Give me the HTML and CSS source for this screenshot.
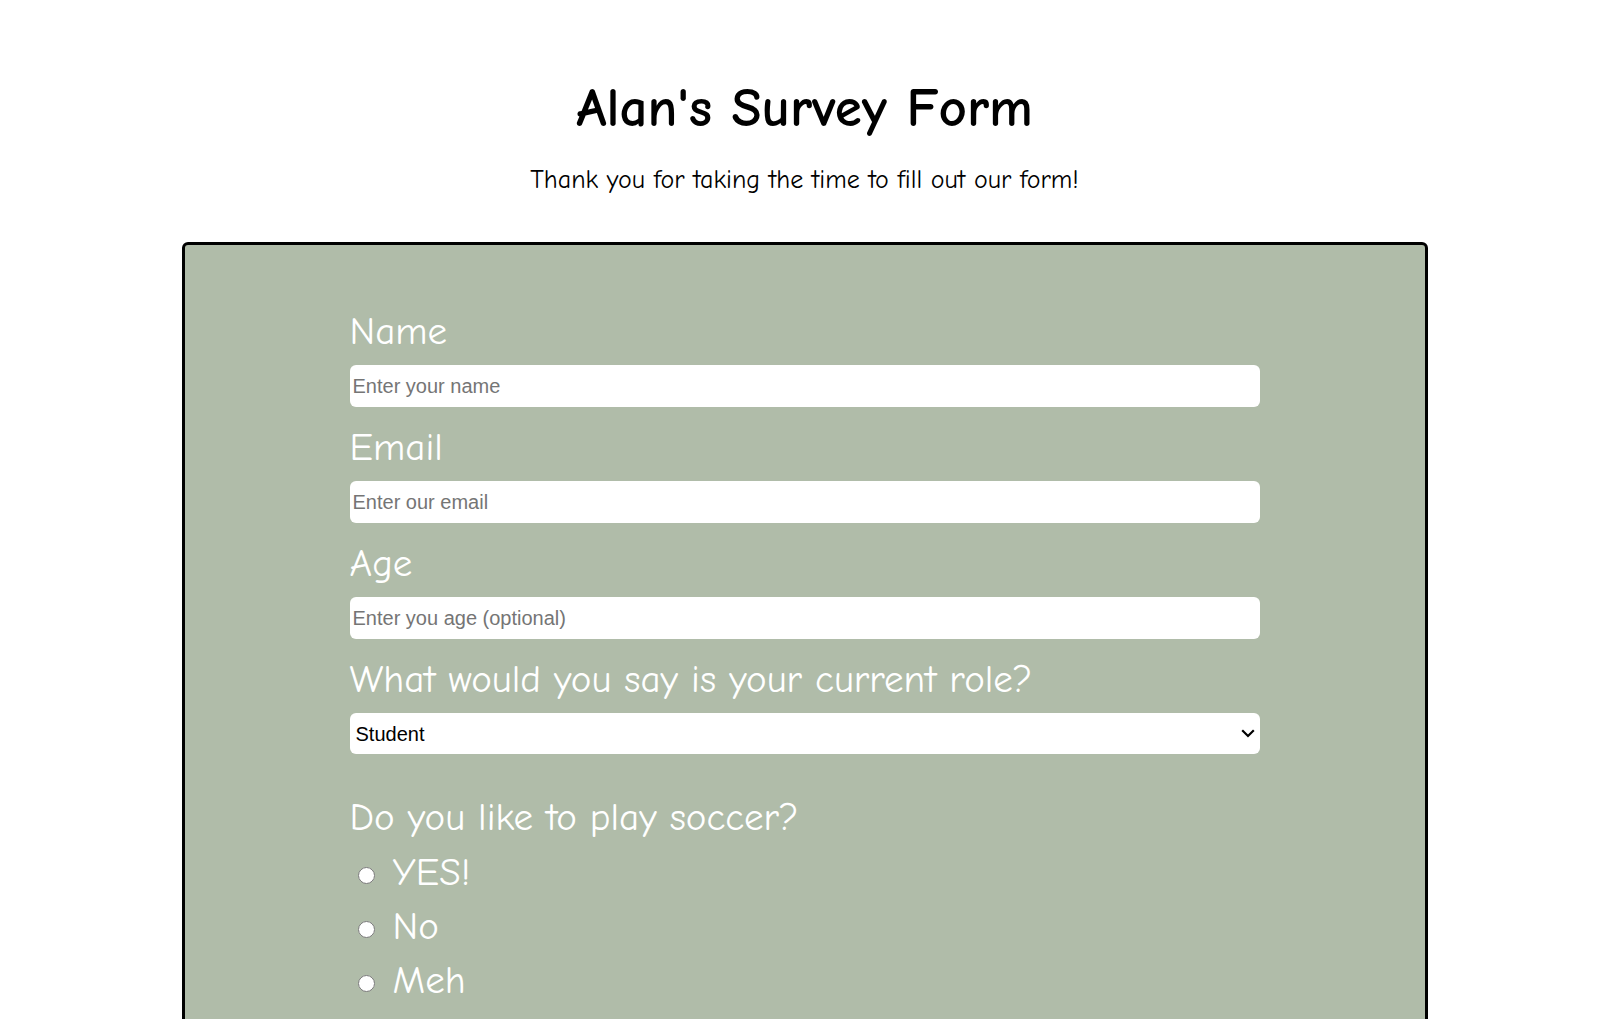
FILE: index.html
```html
<!DOCTYPE html>
<html lang="en">
<head>
<meta charset="utf-8">
<title>Alan's Survey Form</title>
<link rel="stylesheet" href="styles.css">
</head>
<body>
  <header class="header">
    <h1 class="title">Alan's Survey Form</h1>
    <p class="subtitle">Thank you for taking the time to fill out our form!</p>
  </header>
  <main class="card">
    <form class="form">
      <div class="field">
        <label class="label" for="name">Name</label>
        <input class="input" id="name" type="text" placeholder="Enter your name">
      </div>
      <div class="field">
        <label class="label" for="email">Email</label>
        <input class="input" id="email" type="email" placeholder="Enter our email">
      </div>
      <div class="field">
        <label class="label" for="age">Age</label>
        <input class="input" id="age" type="number" placeholder="Enter you age (optional)">
      </div>
      <div class="field">
        <label class="label" for="role">What would you say is your current role?</label>
        <div class="select-wrap">
          <select class="select" id="role">
            <option>Student</option>
            <option>Full time job</option>
            <option>Prefer not to say</option>
          </select>
          <svg class="chevron" width="14" height="9" viewBox="0 0 14 9" aria-hidden="true">
            <path d="M1.2 1.3 L7 7 L12.8 1.3" fill="none" stroke="#000" stroke-width="2.2"/>
          </svg>
        </div>
      </div>
      <div class="group">
        <p class="label group-title">Do you like to play soccer?</p>
        <label class="radio"><input class="radio-input" type="radio" name="soccer"><span>YES!</span></label>
        <label class="radio"><input class="radio-input" type="radio" name="soccer"><span>No</span></label>
        <label class="radio"><input class="radio-input" type="radio" name="soccer"><span>Meh</span></label>
      </div>
    </form>
  </main>
</body>
</html>
```

FILE: styles.css
```css
html, body {
  margin: 0;
  padding: 0;
  background: #ffffff;
}

body {
  font-family: "Comic Sans MS", "Comic Neue", "Open Sans", sans-serif;
  color: #000;
}

.header {
  display: flex;
  flex-direction: column;
  align-items: center;
  padding-top: 76px;
}

.title {
  margin: 0;
  font-size: 55px;
  line-height: 64px;
  font-weight: 700;
}

.subtitle {
  margin: 25px 0 0;
  font-size: 26px;
  line-height: 30px;
}

.card {
  box-sizing: border-box;
  width: 1246px;
  margin: 47px auto 0;
  border: 3px solid #000;
  border-radius: 6px;
  background: #b0bca9;
  padding: 56px 0 60px;
}

.form {
  width: 910px;
  margin: 0 auto;
  display: flex;
  flex-direction: column;
}

.field {
  display: flex;
  flex-direction: column;
  margin-bottom: 10px;
}

.label {
  display: block;
  color: #fff;
  font-size: 39px;
  line-height: 56px;
  padding-top: 3px;
  margin: 0 0 5px;
}

.input,
.select {
  box-sizing: border-box;
  width: 910px;
  height: 42px;
  border: none;
  border-radius: 6px;
  background: #fff;
  font-family: "Liberation Sans", Arial, sans-serif;
  font-size: 20px;
  padding: 0 3px;
  margin: 0;
  outline: none;
}

.input::placeholder {
  color: #757575;
}

.select-wrap {
  position: relative;
  width: 910px;
  height: 41px;
}

.select {
  -webkit-appearance: none;
  appearance: none;
  height: 41px;
  padding: 0 30px 0 6px;
  color: #000;
}

.chevron {
  position: absolute;
  right: 5px;
  top: 16px;
  pointer-events: none;
}

.group {
  display: flex;
  flex-direction: column;
  margin-top: 26px;
}

.group-title {
  padding-top: 0;
  margin: 0;
}

.radio {
  display: flex;
  align-items: center;
  color: #fff;
  font-size: 39px;
  line-height: 54px;
}

.radio-input {
  width: 17px;
  height: 17px;
  margin: 4px 18px 0 8px;
}
```
